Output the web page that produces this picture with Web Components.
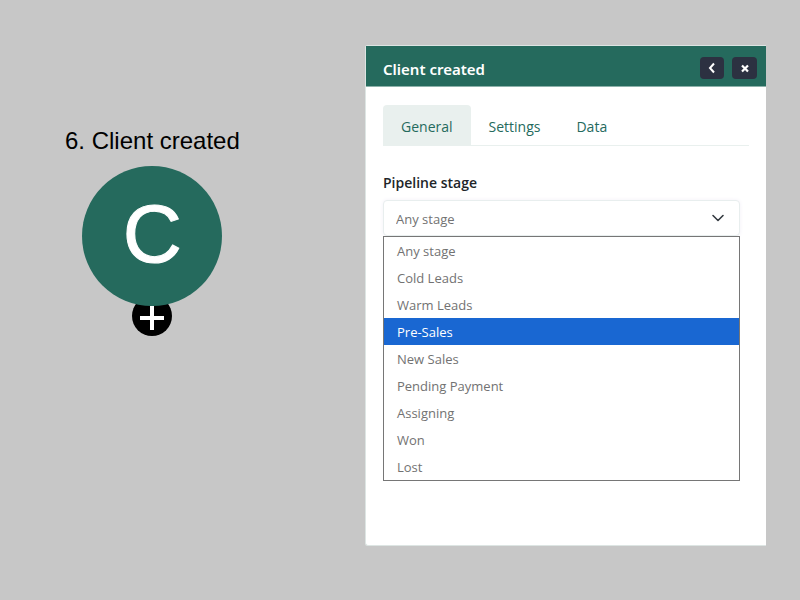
<!DOCTYPE html>
<html lang="en">
<head>
<meta charset="utf-8">
<meta name="viewport" content="width=device-width, initial-scale=1">
<title>Client created</title>
<style>
  html, body { height: 100%; }
  body { margin: 0; background: #c7c7c7; font-family: "Open Sans", "Noto Sans", sans-serif; }
</style>
</head>
<body>
<flow-editor>
  <flow-node slot="node" letter="C">6. Client created</flow-node>
  <side-panel slot="panel" heading="Client created">
    <tab-bar slot="tabs" tabs="General,Settings,Data"></tab-bar>
    <stage-select label="Pipeline stage" active="Pre-Sales"
      options="Any stage,Cold Leads,Warm Leads,Pre-Sales,New Sales,Pending Payment,Assigning,Won,Lost"></stage-select>
  </side-panel>
</flow-editor>

<script>
class Base extends HTMLElement {
  connectedCallback() {
    if (!this.shadowRoot) this.attachShadow({ mode: "open" }).innerHTML = this.render();
  }
}

customElements.define("flow-editor", class extends Base {
  render() {
    return `<style>
      :host { display: flex; box-sizing: border-box; min-height: 100%; padding: 45px 34px 54px 0; }
      main { position: relative; flex: 1; min-width: 260px; }
      ::slotted([slot=node]) { position: absolute; left: 65px; top: 80px; }
      aside { flex: 0 1 401px; display: flex; }
      ::slotted([slot=panel]) { flex: 1; }
    </style>
    <main><slot name="node"></slot></main>
    <aside><slot name="panel"></slot></aside>`;
  }
});

customElements.define("flow-node", class extends Base {
  render() {
    return `<style>
      :host { display: flex; flex-direction: column; align-items: center;
        font-family: "Liberation Sans", Arial, sans-serif; color: #000; }
      .name { font-size: 24px; line-height: 32px; margin-bottom: 9px; white-space: nowrap; }
      .disc { z-index: 1; display: flex; align-items: center; justify-content: center; box-sizing: border-box;
        width: 140px; height: 140px; padding-bottom: 4px;
        border-radius: 50%; background: #256a5d; color: #fff; font-size: 82px; line-height: 92px; -webkit-text-stroke: 1px #fff; }
      button { width: 40px; height: 40px; margin: -10px 0 0; padding: 0; border: 0; border-radius: 50%; background: #000; }
      svg { display: block; }
    </style>
    <div class="name"><slot></slot></div>
    <div class="disc">${this.getAttribute("letter")}</div>
    <button type="button" aria-label="Add step"><svg width="40" height="40" viewBox="0 0 40 40"><path d="M8 22H32M20 10V34" stroke="#fff" stroke-width="4"/></svg></button>`;
  }
});

customElements.define("side-panel", class extends Base {
  render() {
    return `<style>
      :host { display: flex; flex-direction: column; box-sizing: border-box; background: #fff;
        border: 1px solid #dde5e3; border-right: 0; border-radius: 3px 0 0 3px; }
      header { display: flex; align-items: center; gap: 8px; box-sizing: border-box; height: 41px;
        padding: 0 9px 0 17px; background: #256a5d; border-bottom: 1px solid #8db1aa; }
      h1 { flex: 1; margin: 0; padding-top: 5px; font-family: "Noto Sans", sans-serif; font-size: 15px; line-height: 20px; font-weight: 600; color: #fff; }
      button { display: flex; align-items: center; justify-content: center; width: 24px; height: 22px;
        margin-top: 3px; padding: 0; border: 0; border-radius: 4px; background: #2c3141; }
      button:last-of-type { width: 25px; }
      .body { padding: 18px 17px; }
    </style>
    <header>
      <h1>${this.getAttribute("heading")}</h1>
      <button type="button" aria-label="Back"><svg width="12" height="12" viewBox="0 0 12 12"><path d="M8 1.5L4 6L8 10.5" fill="none" stroke="#fff" stroke-width="2"/></svg></button>
      <button type="button" aria-label="Close"><svg width="12" height="12" viewBox="0 0 12 12"><path d="M3 3.5L9 9.5M9 3.5L3 9.5" stroke="#fff" stroke-width="2.2"/></svg></button>
    </header>
    <div class="body"><slot name="tabs"></slot><slot></slot></div>`;
  }
});

customElements.define("tab-bar", class extends Base {
  render() {
    const tabs = this.getAttribute("tabs").split(",").map((t, i) =>
      `<button type="button" role="tab" aria-selected="${i === 0}">${t}</button>`).join("");
    return `<style>
      :host { display: block; }
      [role=tablist] { display: flex; border-bottom: 1px solid #e9f0ee; }
      button { height: 40px; margin: 0; padding: 4px 18px 0; border: 0; border-radius: 4px 4px 0 0;
        background: none; color: #256a5d; font-family: inherit; font-size: 14px; line-height: 20px; }
      [aria-selected=true] { background: #e9f0ee; }
    </style>
    <div role="tablist">${tabs}</div>`;
  }
});

customElements.define("stage-select", class extends Base {
  render() {
    const options = this.getAttribute("options").split(",");
    const active = this.getAttribute("active");
    return `<style>
      :host { display: block; margin: 26px 9px 0 0; }
      label { display: block; margin-bottom: 7px; font-size: 14px; line-height: 21px; font-weight: 600; color: #212529; }
      .field { position: relative; }
      select { display: block; appearance: none; box-sizing: border-box; width: 100%; height: 36px; margin: 0;
        padding: 2px 36px 0 12px; border: 1px solid #e8eeee; border-radius: 4px; background: #fff;
        box-shadow: 0 0 4px #f3f0f8; color: #727272; font-family: inherit; font-size: 13px; }
      svg { position: absolute; right: 15px; top: 11px; pointer-events: none; }
      ul { position: absolute; z-index: 2; left: 0; right: 0; top: 100%; margin: 0; padding: 0; list-style: none;
        border: 1px solid #767676; background: #fff; }
      li { padding: 1px 13px 0; font-size: 13px; line-height: 26px; color: #727272; }
      .active { background: #1967d2; color: #fff; }
    </style>
    <label for="stage">${this.getAttribute("label")}</label>
    <div class="field">
      <select id="stage">${options.map(o => `<option>${o}</option>`).join("")}</select>
      <svg width="14" height="14" viewBox="0 0 14 14"><path d="M2 4.5L7 9.5L12 4.5" fill="none" stroke="#343a40" stroke-width="1.6" stroke-linecap="round" stroke-linejoin="round"/></svg>
      <ul role="listbox" aria-label="${this.getAttribute("label")}">${options.map(o =>
        `<li role="option" aria-selected="${o === active}"${o === active ? ' class="active"' : ""}>${o}</li>`).join("")}</ul>
    </div>`;
  }
});
</script>
</body>
</html>
